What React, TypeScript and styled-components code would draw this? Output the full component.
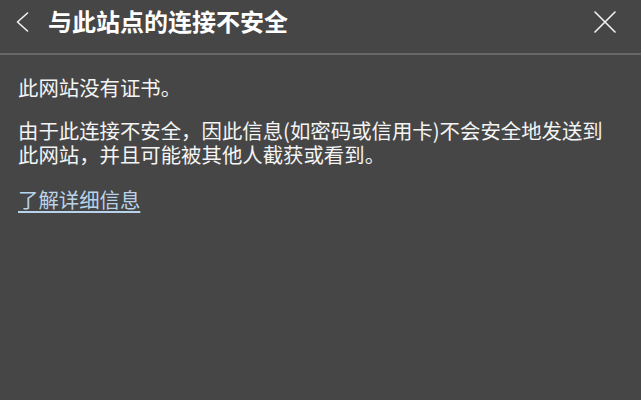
import styled, { createGlobalStyle } from "styled-components";

const GlobalStyle = createGlobalStyle`
  html, body {
    margin: 0;
    padding: 0;
    background: #464646;
  }
  body {
    font-family: "Noto Sans CJK SC", "Noto Sans", sans-serif;
  }
`;

function ChevronLeft() {
  return (
    <svg width="13" height="20" viewBox="0 0 13 20" fill="none">
      <polyline
        points="11.5,1 1.5,10 11.5,19"
        stroke="#f2f2f2"
        strokeWidth="1.6"
        strokeLinecap="round"
        strokeLinejoin="round"
      />
    </svg>
  );
}

function CloseIcon() {
  return (
    <svg width="22" height="22" viewBox="0 0 22 22" fill="none">
      <path
        d="M1 1 L21 21 M21 1 L1 21"
        stroke="#f2f2f2"
        strokeWidth="1.6"
        strokeLinecap="round"
      />
    </svg>
  );
}

function App() {
  return (
    <>
      <GlobalStyle />
      <Panel>
        <Header>
          <IconButton aria-label="返回">
            <ChevronLeft />
          </IconButton>
          <Title>与此站点的连接不安全</Title>
          <CloseButton aria-label="关闭">
            <CloseIcon />
          </CloseButton>
        </Header>
        <Body>
          <Paragraph>此网站没有证书。</Paragraph>
          <Paragraph>
            由于此连接不安全，因此信息(如密码或信用卡)不会安全地发送到此网站，并且可能被其他人截获或看到。
          </Paragraph>
          <Link href="#">了解详细信息</Link>
        </Body>
      </Panel>
    </>
  );
}

const Panel = styled.div`
  width: 641px;
  height: 400px;
  background: #464646;
  color: #f2f2f2;
  display: flex;
  flex-direction: column;
`;

const Header = styled.div`
  height: 55px;
  box-sizing: border-box;
  padding: 0 0 9px 16px;
  display: flex;
  align-items: center;
  border-bottom: 2px solid #686868;
`;

const IconButton = styled.button`
  background: none;
  border: none;
  padding: 0;
  display: flex;
  align-items: center;
  justify-content: center;
  cursor: pointer;
`;

const CloseButton = styled(IconButton)`
  margin-left: auto;
  margin-right: 25px;
`;

const Title = styled.h1`
  margin: -2px 0 0 19px;
  font-size: 24px;
  font-weight: 700;
  line-height: 28px;
  color: #ffffff;
`;

const Body = styled.div`
  padding: 20px 18px 0 18px;
  display: flex;
  flex-direction: column;
  align-items: flex-start;
`;

const Paragraph = styled.p`
  margin: 0 0 19px 0;
  font-size: 20.4px;
  line-height: 24px;
  color: #f4f4f4;
`;

const Link = styled.a`
  margin-top: 2px;
  font-size: 20.4px;
  line-height: 24px;
  color: #b9d3ea;
  text-decoration: underline;
  text-decoration-thickness: 2px;
  text-underline-offset: 3px;
`;

export default App;
